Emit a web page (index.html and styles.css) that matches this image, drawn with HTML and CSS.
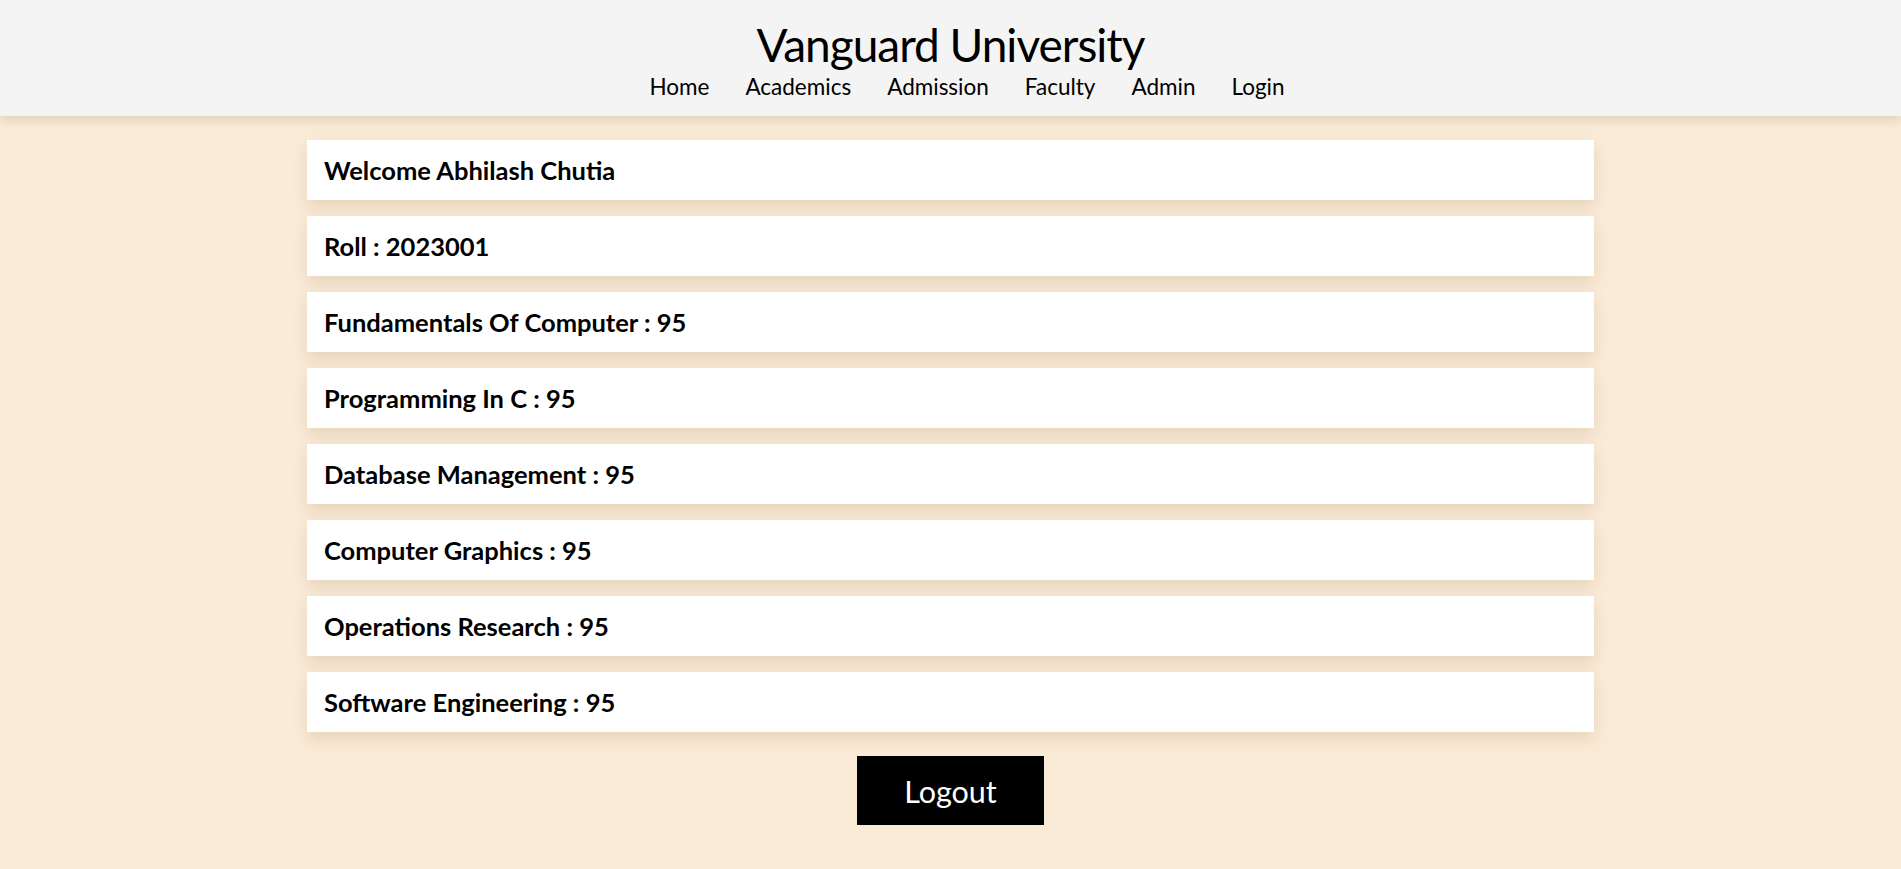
FILE: index.html
```html
<!DOCTYPE html>
<html lang="en">
<head>
<meta charset="utf-8">
<title>Vanguard University</title>
<link rel="stylesheet" href="styles.css">
</head>
<body>
<header class="site-header">
  <h1 class="brand">Vanguard University</h1>
  <nav class="nav">
    <a href="#">Home</a>
    <a href="#">Academics</a>
    <a href="#">Admission</a>
    <a href="#">Faculty</a>
    <a href="#">Admin</a>
    <a href="#">Login</a>
  </nav>
</header>
<main class="content">
  <div class="card">Welcome Abhilash Chutia</div>
  <div class="card">Roll : 2023001</div>
  <div class="card">Fundamentals Of Computer : 95</div>
  <div class="card">Programming In C : 95</div>
  <div class="card">Database Management : 95</div>
  <div class="card">Computer Graphics : 95</div>
  <div class="card">Operations Research : 95</div>
  <div class="card">Software Engineering : 95</div>
  <button class="logout">Logout</button>
</main>
</body>
</html>
```
FILE: styles.css
```css
* { box-sizing: border-box; }
html, body {
  margin: 0;
  padding: 0;
}
body {
  background: #faebd7;
  font-family: Lato, "Open Sans", sans-serif;
  color: #000;
  min-height: 869px;
}
.site-header {
  background: #f4f4f4;
  height: 116px;
  display: flex;
  flex-direction: column;
  align-items: center;
  padding-top: 19px;
  box-shadow: 0 3px 12px rgba(80, 50, 20, 0.16);
  position: relative;
  z-index: 1;
}
.brand {
  margin: 0;
  font-weight: 400;
  font-size: 46px;
  letter-spacing: -1px;
  line-height: 52px;
}
.nav {
  display: flex;
  gap: 36px;
  padding-left: 33px;
}
.nav a {
  color: #000;
  text-decoration: none;
  font-size: 22.5px;
  line-height: 31px;
}
.content {
  width: 1287px;
  margin: 0 auto;
  padding-top: 24px;
  display: flex;
  flex-direction: column;
  gap: 16px;
  align-items: stretch;
}
.card {
  background: #fff;
  height: 60px;
  display: flex;
  align-items: center;
  padding-left: 17px;
  font-size: 25.5px;
  font-weight: 700;
  box-shadow: 0 7px 15px rgba(120, 80, 30, 0.15);
}
.logout {
  align-self: center;
  margin-top: 8px;
  width: 187px;
  height: 69px;
  background: #000;
  color: #fff;
  border: none;
  font-family: Lato, "Open Sans", sans-serif;
  font-size: 30.5px;
  cursor: pointer;
}
```
